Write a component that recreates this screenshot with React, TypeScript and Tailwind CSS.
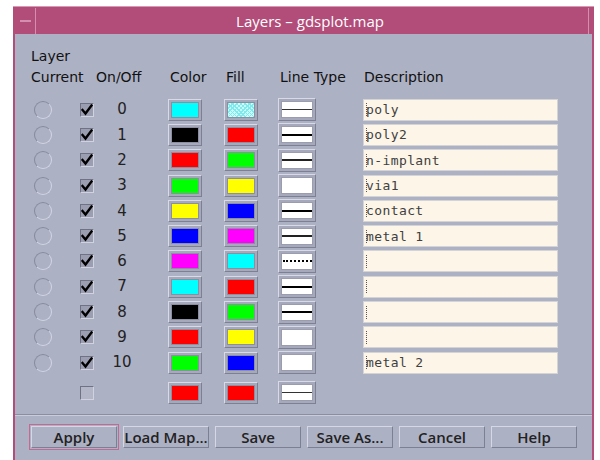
import React from "react";

type Row = {
  n: number;
  color: string;
  fill: string;
  line: "none" | "thin" | "mid" | "thick" | "dotted";
  desc: string;
};

const rows: Row[] = [
  { n: 0, color: "#00ffff", fill: "pattern", line: "thin", desc: "poly" },
  { n: 1, color: "#000000", fill: "#ff0000", line: "thick", desc: "poly2" },
  { n: 2, color: "#ff0000", fill: "#00ff00", line: "mid", desc: "n-implant" },
  { n: 3, color: "#00ff00", fill: "#ffff00", line: "none", desc: "via1" },
  { n: 4, color: "#ffff00", fill: "#0000ff", line: "thick", desc: "contact" },
  { n: 5, color: "#0000ff", fill: "#ff00ff", line: "mid", desc: "metal 1" },
  { n: 6, color: "#ff00ff", fill: "#00ffff", line: "dotted", desc: "" },
  { n: 7, color: "#00ffff", fill: "#ff0000", line: "thick", desc: "" },
  { n: 8, color: "#000000", fill: "#00ff00", line: "thick", desc: "" },
  { n: 9, color: "#ff0000", fill: "#ffff00", line: "none", desc: "" },
  { n: 10, color: "#00ff00", fill: "#0000ff", line: "none", desc: "metal 2" },
];

const sans = { fontFamily: '"Open Sans", "DejaVu Sans", sans-serif' };
const dejavu = { fontFamily: '"DejaVu Sans", "Open Sans", sans-serif' };
const mono = { fontFamily: '"DejaVu Sans Mono", "Liberation Mono", monospace' };

function Radio() {
  return (
    <div className="w-[18px] h-[18px] rounded-full border border-t-[#868a9c] border-l-[#868a9c] border-b-[#d2d5e2] border-r-[#d2d5e2]" />
  );
}

function Check({ on }: { on: boolean }) {
  return (
    <div
      className={
        "w-[14px] h-[14px] border border-t-[#6f7285] border-l-[#6f7285] border-b-[#d0d3df] border-r-[#d0d3df] flex items-center justify-center " +
        (on ? "bg-[#9b9eb0]" : "bg-[#b3b6c7]")
      }
    >
      {on && (
        <svg width="12" height="12" viewBox="0 0 12 12">
          <path d="M1.5 6 L4.5 9.5 L10.5 1.5" fill="none" stroke="#000" strokeWidth="2.4" strokeLinecap="square" />
        </svg>
      )}
    </div>
  );
}

function Swatch({ color }: { color: string }) {
  const pattern =
    color === "pattern"
      ? {
          backgroundColor: "#c8ffff",
          backgroundImage:
            "repeating-linear-gradient(45deg, #7fe9ee 0 1px, transparent 1px 3px), repeating-linear-gradient(-45deg, #7fe9ee 0 1px, transparent 1px 3px)",
        }
      : { backgroundColor: color };
  return (
    <div className="w-[34px] h-[22px] border border-t-[#d8dbe6] border-l-[#d8dbe6] border-b-[#7d8092] border-r-[#7d8092] bg-[#a5a9bb] p-[2px]">
      <div className="w-full h-full border border-[#8c8fa0]" style={pattern} />
    </div>
  );
}

function LineBox({ line }: { line: Row["line"] }) {
  return (
    <div className="w-[38px] h-[23px] border border-t-[#d8dbe6] border-l-[#d8dbe6] border-b-[#7d8092] border-r-[#7d8092] bg-[#a5a9bb] p-[2px]">
      <div className="w-full h-full bg-white border border-[#9a9dae] flex items-center">
        {line === "thin" && <div className="w-full h-[1px] bg-[#333]" />}
        {line === "mid" && <div className="w-full h-[2px] bg-[#222]" />}
        {line === "thick" && <div className="w-full h-[2px] bg-[#000]" />}
        {line === "dotted" && <div className="w-full h-[2px] ml-[1px] border-t-2 border-dotted border-[#000]" />}
      </div>
    </div>
  );
}

function Desc({ text }: { text: string }) {
  return (
    <div className="w-[195px] h-[22px] bg-[#fdf5e7] border border-[#d4d3d6] flex items-center pl-[2px]">
      <div className="w-[1px] h-[13px] border-l border-dotted border-[#555]" />
      <span className="text-[13px] tracking-[0.4px] text-[#404040] leading-none -ml-[1px]" style={mono}>
        {text}
      </span>
    </div>
  );
}

function Btn({ label, focus }: { label: string; focus?: boolean }) {
  return (
    <div
      className={
        "w-[90px] h-[26px] p-[1px] " + (focus ? "border border-[#c46a92]" : "border border-transparent")
      }
    >
      <div className="w-full h-full border border-t-[#d5d8e4] border-l-[#d5d8e4] border-b-[#7d8092] border-r-[#7d8092] flex items-center justify-center text-[15px] font-semibold text-[#222]">
        {label}
      </div>
    </div>
  );
}

export default function App() {
  return (
    <div className="w-[600px] h-[460px] bg-white overflow-hidden" style={sans}>
      <div className="ml-[13px] mt-[6px] w-[581px] h-[456px] bg-[#b24c79] px-[2px] pt-[1px] flex flex-col border-t border-[#d79ab5]">
        {/* title bar */}
        <div className="h-[26px] flex items-stretch">
          <div className="w-[21px] border-r border-[#d58fae] flex items-center justify-center">
            <div className="w-[11px] h-[2px] bg-[#d58fae]" />
          </div>
          <div className="flex-1 flex items-center justify-center text-white text-[15px] pr-[4px]">
            Layers – gdsplot.map
          </div>
          <div className="w-[4px] border-l border-[#d58fae]" />
        </div>
        {/* body */}
        <div className="flex-1 bg-[#adb1c4] flex flex-col mb-[1px]">
          <div className="pl-[16px] pt-[12px] text-[14px] text-[#111] leading-[21px]" style={dejavu}>
            <div>Layer</div>
            <div className="flex">
              <span className="w-[65px]">Current</span>
              <span className="w-[74px]">On/Off</span>
              <span className="w-[56px]">Color</span>
              <span className="w-[54px]">Fill</span>
              <span className="w-[84px]">Line Type</span>
              <span>Description</span>
            </div>
          </div>
          <div className="pl-[19px] pt-[9px] flex flex-col">
            {rows.map((r) => (
              <div key={r.n} className="h-[25.3px] flex items-center">
                <Radio />
                <div className="ml-[28px]">
                  <Check on />
                </div>
                <div className="ml-[14px] w-[28px] text-center text-[15px] text-[#222]" style={dejavu}>
                  {r.n}
                </div>
                <div className="ml-[32px]">
                  <Swatch color={r.color} />
                </div>
                <div className="ml-[22px]">
                  <Swatch color={r.fill} />
                </div>
                <div className="ml-[20px]">
                  <LineBox line={r.line} />
                </div>
                <div className="ml-[47px]">
                  <Desc text={r.desc} />
                </div>
              </div>
            ))}
            <div className="h-[25px] mt-[5px] flex items-center">
              <div className="w-[18px]" />
              <div className="ml-[28px]">
                <Check on={false} />
              </div>
              <div className="ml-[14px] w-[28px]" />
              <div className="ml-[32px]">
                <Swatch color="#ff0000" />
              </div>
              <div className="ml-[22px]">
                <Swatch color="#ff0000" />
              </div>
              <div className="ml-[20px]">
                <LineBox line="thin" />
              </div>
            </div>
          </div>
          <div className="mt-[9px] h-[2px] border-t border-[#8a8ea0] border-b border-b-[#c9ccd9]" />
          <div className="flex gap-[2px] pl-[14px] pt-[8px]">
            <Btn label="Apply" focus />
            <Btn label="Load Map..." />
            <Btn label="Save" />
            <Btn label="Save As..." />
            <Btn label="Cancel" />
            <Btn label="Help" />
          </div>
        </div>
      </div>
    </div>
  );
}
